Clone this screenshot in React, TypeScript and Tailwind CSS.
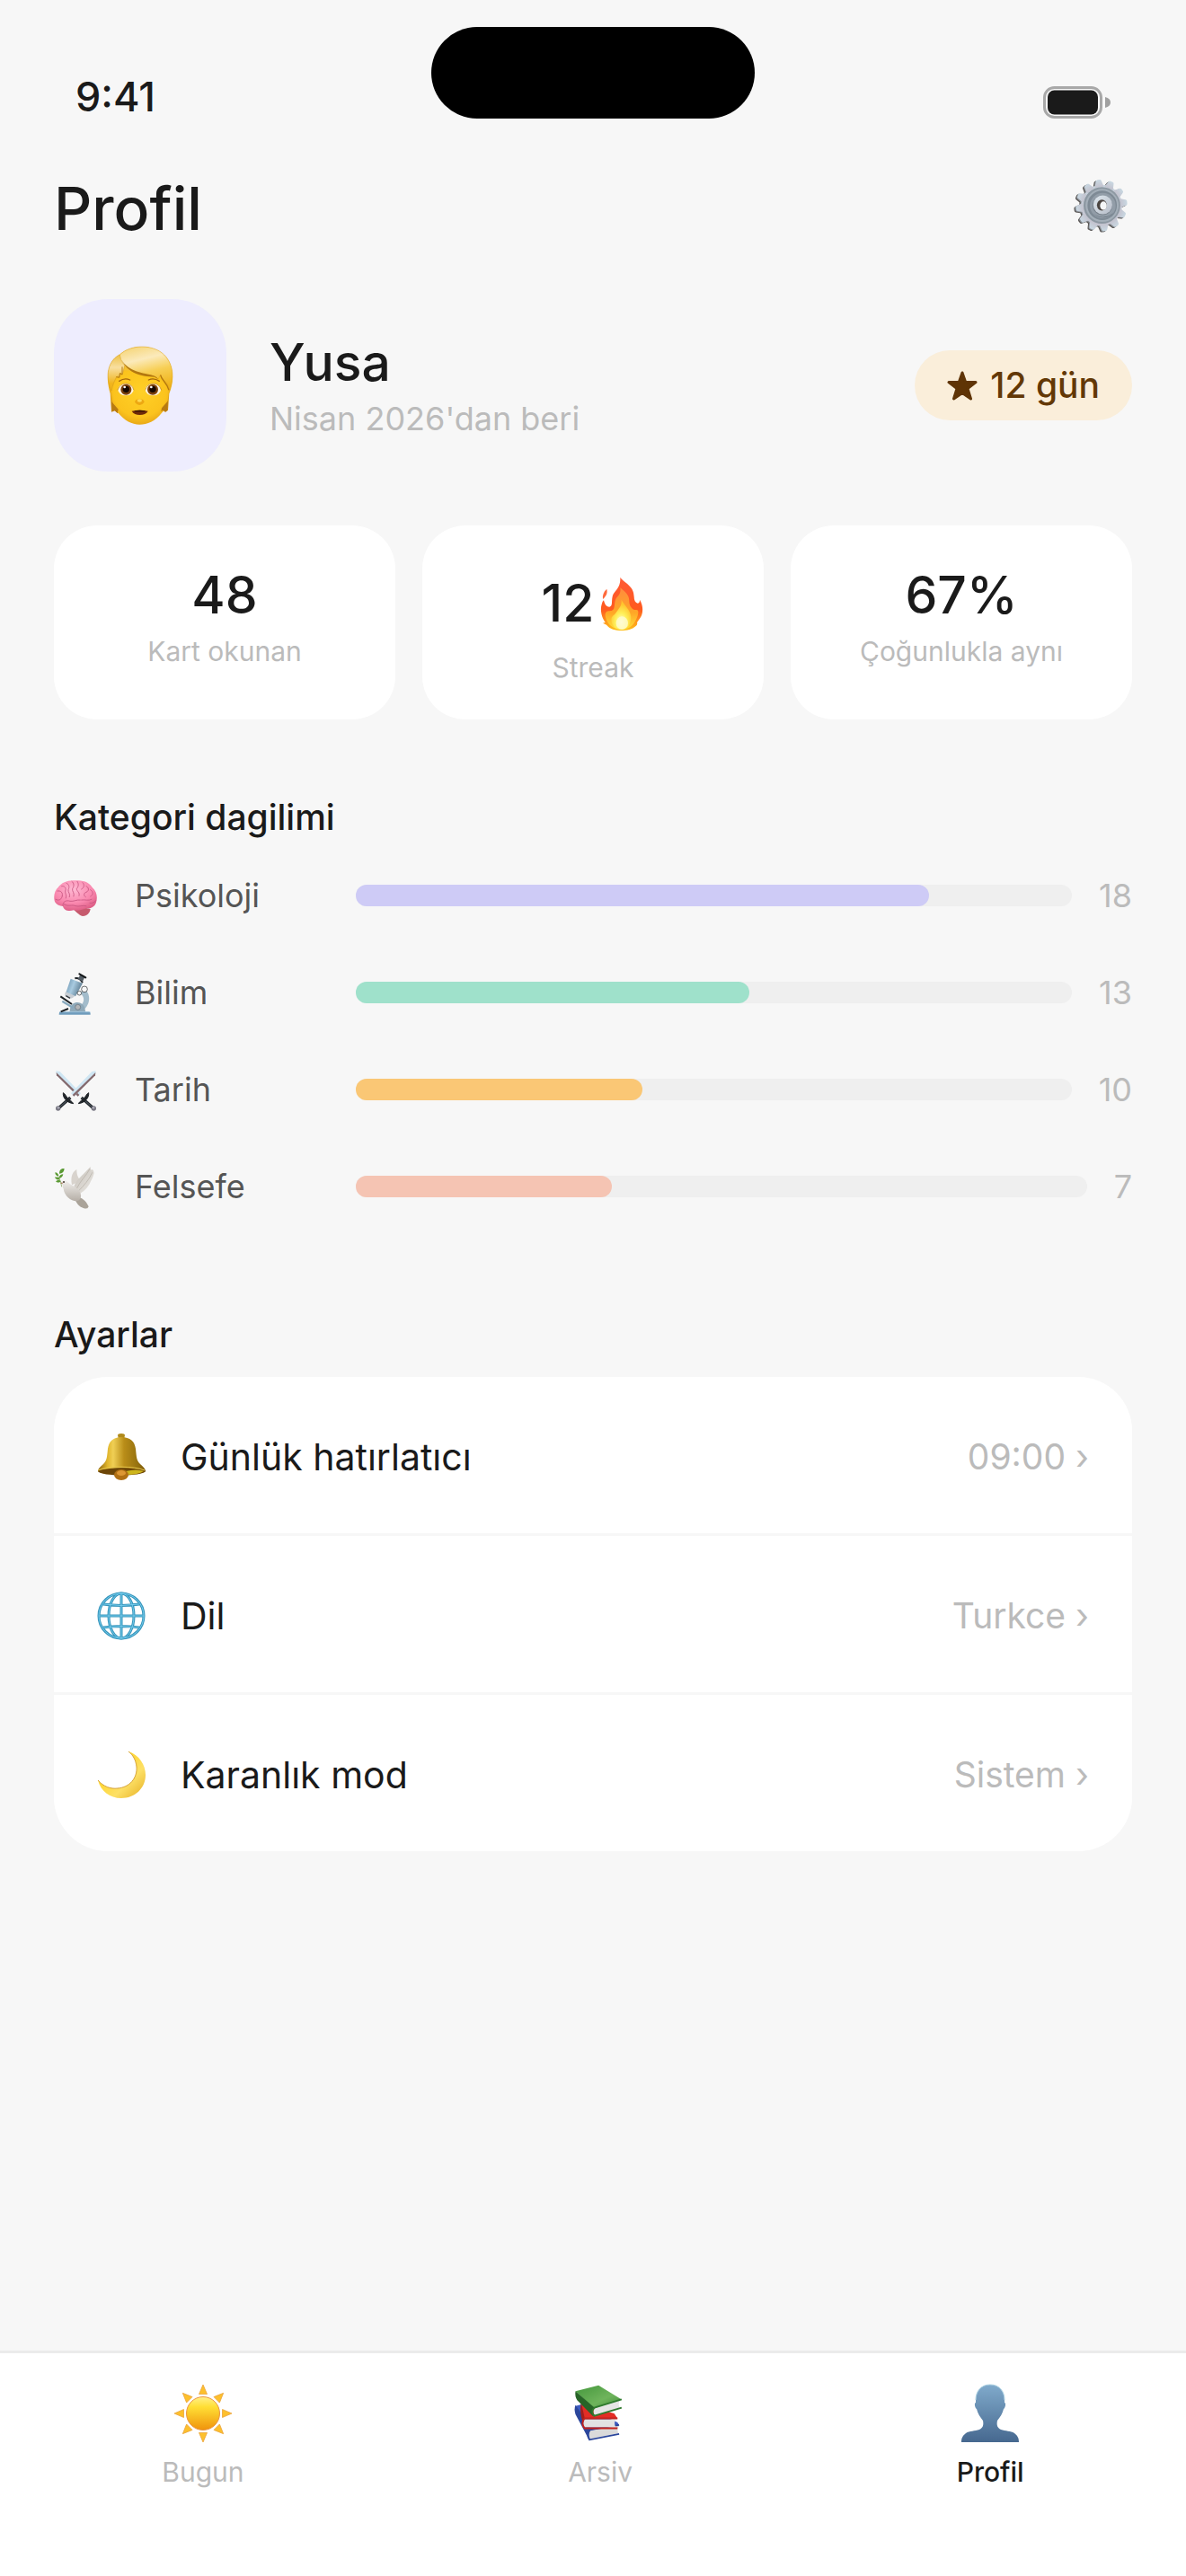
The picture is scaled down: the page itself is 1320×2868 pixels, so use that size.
import { useState } from "react";
import type { ReactNode } from "react";

function BatteryIcon() {
  return (
    <svg viewBox="0 0 75 36" className="h-9 w-[75px]" aria-hidden="true">
      <rect x="1.5" y="1.5" width="63" height="33" rx="11" fill="none" stroke="#a8a8a8" strokeWidth="3" />
      <rect x="5" y="4.5" width="56" height="27" rx="7.5" fill="#1a1a1a" />
      <path d="M69 12c4 1 6 3 6 6s-2 5-6 6z" fill="#a0a0a0" />
    </svg>
  );
}

const teeth = Array.from({ length: 12 }, (_, i) => i * 30 - 7);

function GearShape({ fill }: { fill: string }) {
  return (
    <g fill={fill}>
      <circle cx="256" cy="146" r="67" />
      {teeth.map((angle) => (
        <path key={angle} d="M241 86L247 66Q248 62 252 62H260Q264 62 265 66L271 86Z" transform={`rotate(${angle} 256 146)`} />
      ))}
    </g>
  );
}

function GearIcon() {
  return (
    <svg viewBox="162 56 182 182" className="size-[62px]" aria-hidden="true">
      <defs>
        <linearGradient id="gearFace" x1="0" y1="0" x2="0" y2="1">
          <stop offset="0" stopColor="#c9d8e2" />
          <stop offset="1" stopColor="#c3c2ce" />
        </linearGradient>
        <linearGradient id="gearHub" x1="0" y1="0" x2="1" y2="1">
          <stop offset="0" stopColor="#dfe8ee" />
          <stop offset="1" stopColor="#b6bcc8" />
        </linearGradient>
      </defs>
      <g transform="translate(-6 4)">
        <GearShape fill="#55514f" />
      </g>
      <g transform="translate(-3 2)">
        <GearShape fill="#8a9096" />
      </g>
      <GearShape fill="url(#gearFace)" />
      <circle cx="257" cy="146" r="60" fill="#8d98a2" />
      <circle cx="258" cy="146" r="54" fill="#a4afb9" />
      <circle cx="258" cy="146" r="48" fill="#7e8a95" />
      <circle cx="260" cy="147" r="42" fill="#929da8" />
      <path d="M230 172A42 42 0 0 0 296 168A46 46 0 0 1 230 172Z" fill="#68737e" />
      <circle cx="259" cy="146" r="32" fill="#77818b" />
      <circle cx="260" cy="144" r="31" fill="url(#gearHub)" />
      <ellipse cx="257" cy="145" rx="16" ry="18" fill="#4b4541" />
      <ellipse cx="262" cy="147" rx="11" ry="14" fill="#f4f6f7" />
    </svg>
  );
}

function FaceIcon() {
  return (
    <svg viewBox="39 27 222 270" className="h-[90px] w-[74px]" aria-hidden="true">
      <defs>
        <linearGradient id="faceHair" x1="0" y1="0" x2="0" y2="1">
          <stop offset="0" stopColor="#f3c64b" />
          <stop offset="0.5" stopColor="#f6bd22" />
          <stop offset="1" stopColor="#c98a12" />
        </linearGradient>
        <radialGradient id="faceSkin" cx="0.5" cy="0.4" r="0.65">
          <stop offset="0" stopColor="#ffd027" />
          <stop offset="0.7" stopColor="#fbc31d" />
          <stop offset="1" stopColor="#e3a016" />
        </radialGradient>
        <linearGradient id="faceTop" x1="0.3" y1="0" x2="0.6" y2="1">
          <stop offset="0" stopColor="#f6d77e" />
          <stop offset="0.3" stopColor="#fbeabb" />
          <stop offset="0.6" stopColor="#f7cf55" />
          <stop offset="1" stopColor="#efb31b" />
        </linearGradient>
        <linearGradient id="faceSide" x1="0" y1="0" x2="0" y2="1">
          <stop offset="0" stopColor="#eec146" />
          <stop offset="0.35" stopColor="#f8dfa0" />
          <stop offset="0.8" stopColor="#f0b41c" />
        </linearGradient>
      </defs>
      <path d="M54 251L50 190C38 150 34 86 78 62C118 22 196 24 232 62C264 92 264 150 247 190L243 245L234 252L228 246L222 252L148 262L82 250L74 255L66 247Z" fill="url(#faceHair)" />
      <path d="M53 168C60 140 76 128 92 112L206 120C226 134 240 154 246 176C243 212 240 238 222 254C200 282 174 293 148 293C122 293 98 280 78 256C58 238 55 208 53 168Z" fill="url(#faceSkin)" />
      <path d="M54 180C36 148 34 86 80 60C92 66 98 82 98 96L91 126L84 120L82 134L72 132C64 146 58 162 54 180Z" fill="url(#faceSide)" stroke="#d49a1a" strokeWidth="1.5" />
      <path d="M82 60C118 24 194 24 230 60C262 92 264 140 248 176C244 160 238 150 222 142L218 126L210 142C204 130 192 132 176 126C130 124 88 104 82 60Z" fill="url(#faceTop)" stroke="#dca21c" strokeWidth="1.5" />
      <path d="M84 64C92 100 132 118 176 125C192 128 204 130 210 142L198 134C150 134 98 118 84 64Z" fill="#b37810" />
      <path d="M218 128C222 146 238 150 246 178" fill="none" stroke="#b37810" strokeWidth="4" />
      <path d="M90 100V126L82 122L80 136L70 134" fill="none" stroke="#b37810" strokeWidth="3" />
      <path d="M54 216L56 250L64 246L74 254L77 242Z" fill="#b77a12" />
      <path d="M243 214L241 245L234 250L226 245L220 250L222 238Z" fill="#b77a12" />
      <path d="M80 148Q98 136 116 144M178 144Q196 136 214 148" fill="none" stroke="#a3640c" strokeWidth="4" strokeLinecap="round" />
      <ellipse cx="102" cy="176" rx="26" ry="20" fill="#fff6e3" />
      <ellipse cx="193" cy="176" rx="26" ry="20" fill="#fff6e3" />
      <path d="M74 178Q86 154 104 156Q122 157 129 178M167 178Q174 157 192 156Q212 154 221 178" fill="none" stroke="#b87a15" strokeWidth="2" />
      <circle cx="103" cy="176" r="18" fill="#7a3f0b" />
      <circle cx="192" cy="176" r="18" fill="#7a3f0b" />
      <circle cx="103" cy="175" r="11" fill="#170800" />
      <circle cx="192" cy="175" r="11" fill="#170800" />
      <circle cx="98" cy="168" r="4" fill="#fff" />
      <circle cx="187" cy="168" r="4" fill="#fff" />
      <path d="M132 218Q134 208 148 208Q162 208 164 218Q156 229 148 228Q140 229 132 218Z" fill="#eda812" />
      <ellipse cx="148" cy="213" rx="8" ry="5" fill="#ffd953" />
      <path d="M122 248Q148 242 176 248Q168 261 149 261Q130 261 122 248Z" fill="#6d2a08" />
      <path d="M130 247Q148 244 168 247L164 250H134Z" fill="#2c0d02" />
    </svg>
  );
}

function FlameIcon() {
  return (
    <svg viewBox="222 26 150 186" className="h-[62px] w-[50px]" aria-hidden="true">
      <defs>
        <linearGradient id="flameOuter" x1="0" y1="0" x2="0" y2="1">
          <stop offset="0" stopColor="#ff5a36" />
          <stop offset="0.6" stopColor="#ff5a1f" />
          <stop offset="1" stopColor="#ffc21a" />
        </linearGradient>
        <linearGradient id="flameMid" x1="0" y1="0" x2="0" y2="1">
          <stop offset="0" stopColor="#ff8a3d" />
          <stop offset="0.6" stopColor="#ffa726" />
          <stop offset="1" stopColor="#ffe23a" />
        </linearGradient>
        <radialGradient id="flameCore" cx="0.5" cy="0.75" r="0.6">
          <stop offset="0" stopColor="#fffde0" />
          <stop offset="0.5" stopColor="#fff05a" />
          <stop offset="1" stopColor="#ffc52e" />
        </radialGradient>
      </defs>
      <path d="M247 70C250 84 246 92 234 104C232 92 236 80 247 70Z" fill="#ff6a3c" />
      <path d="M292 31C304 50 338 58 338 96C338 108 342 116 350 118C357 117 357 110 357 106C370 128 369 152 358 168L348 182C350 186 348 192 344 194C332 206 314 209 296 209C276 209 256 204 246 190L234 184L242 182C230 166 224 140 230 122C232 114 234 110 237 108C240 120 244 130 256 130C268 128 262 112 266 96C270 76 294 70 292 31Z" fill="url(#flameOuter)" />
      <path d="M292 66C312 82 322 92 322 112C322 128 334 142 346 140C356 140 352 158 346 170C336 194 318 206 296 206C270 206 250 190 244 168C238 150 246 142 256 144C278 144 270 120 276 106C282 92 296 90 292 66Z" fill="url(#flameMid)" />
      <path d="M296 106C304 124 326 138 328 164C328 190 314 206 297 206C278 206 262 194 262 172C262 160 274 158 280 146C288 134 298 126 296 106Z" fill="url(#flameCore)" />
      <ellipse cx="298" cy="184" rx="20" ry="22" fill="#fffbd0" opacity="0.8" />
    </svg>
  );
}

function StarIcon() {
  return (
    <svg viewBox="0 0 34 33" className="h-[33px] w-[34px]" aria-hidden="true">
      <path d="M17 2L20.6 12.3L32 12.6L23 19.6L26.5 31L17 24.4L7.5 31L11 19.6L2 12.6L13.4 12.3Z" fill="#5f3406" stroke="#5f3406" strokeWidth="3" strokeLinejoin="round" />
    </svg>
  );
}

function BrainIcon() {
  return (
    <svg viewBox="180 336 150 150" className="size-full" aria-hidden="true">
      <defs>
        <radialGradient id="brain" cx="0.45" cy="0.3" r="0.75">
          <stop offset="0" stopColor="#ffb9d3" />
          <stop offset="0.6" stopColor="#f987ae" />
          <stop offset="1" stopColor="#d9577f" />
        </radialGradient>
      </defs>
      <path d="M246 458L284 452L302 456C300 472 288 480 276 480C264 478 256 466 246 458Z" fill="#c65a6d" />
      <path d="M182 428C178 410 184 392 194 384C206 366 230 358 252 361C280 358 300 370 308 384C322 396 326 414 322 430C320 446 306 456 290 454C276 458 262 464 246 460C230 466 212 460 210 446C196 446 184 438 182 428Z" fill="url(#brain)" />
      <path d="M210 446C208 430 222 426 234 430C246 432 256 424 268 426M214 440C228 450 240 440 252 446C264 450 276 442 288 446M186 424C198 430 206 424 208 412M192 396C204 394 210 402 208 412M206 380C216 378 222 386 218 396C216 404 224 408 220 420M222 370C232 374 232 384 228 392C226 400 236 404 232 416M240 364C248 370 248 380 242 388C240 398 250 402 246 414M258 364C264 372 262 382 256 388C256 398 268 400 264 412M276 368C284 376 280 386 272 390M288 380C298 384 298 396 288 400C280 402 278 412 286 416M302 392C312 398 312 410 302 414M272 426C284 424 296 430 306 424M300 436C308 438 316 434 320 428" fill="none" stroke="#c75480" strokeWidth="2.5" strokeLinecap="round" />
    </svg>
  );
}

function MicroscopeIcon() {
  return (
    <svg viewBox="180 662 150 150" className="size-full" aria-hidden="true">
      <defs>
        <linearGradient id="tube" x1="0" y1="0.3" x2="1" y2="0.7">
          <stop offset="0" stopColor="#6f97b3" />
          <stop offset="0.4" stopColor="#a9cbe0" />
          <stop offset="1" stopColor="#4d6b80" />
        </linearGradient>
      </defs>
      <path d="M280 724C304 738 304 776 278 796L262 786C282 774 286 754 268 740Z" fill="#a3bccb" />
      <path d="M234 792C238 762 280 762 284 794L286 804H232Z" fill="#8fa9b9" />
      <circle cx="260" cy="786" r="9" fill="#b4b6b8" stroke="#5d6a74" strokeWidth="2" />
      <path d="M200 801H298Q303 803 302 811H197Q197 803 200 801Z" fill="#6f9cbc" />
      <path d="M199 802H302" stroke="#b9d8ea" strokeWidth="2" />
      <path d="M202 750L240 776" stroke="#1c2125" strokeWidth="6" />
      <path d="M208 766L244 788" stroke="#86a8bd" strokeWidth="7" />
      <path d="M203 801L228 791" stroke="#1c2125" strokeWidth="6" />
      <path d="M236 691L276 706L252 750L220 738Z" fill="url(#tube)" />
      <path d="M219 734L250 748Q240 760 232 756L218 750Q214 744 219 734Z" fill="#c7cdd3" />
      <path d="M220 748L234 756" stroke="#363c42" strokeWidth="4" />
      <path d="M250 690Q264 686 276 704" fill="none" stroke="#20262a" strokeWidth="6" />
      <path d="M269 676L284 684L276 700L260 692Z" fill="#555e66" />
      <path d="M265 675L286 687" stroke="#15181a" strokeWidth="6" strokeLinecap="round" />
      <circle cx="282" cy="726" r="10" fill="#f7f7f7" stroke="#22272b" strokeWidth="2" />
      <circle cx="265" cy="739" r="7" fill="#f7f7f7" stroke="#22272b" strokeWidth="2" />
    </svg>
  );
}

function Sword() {
  return (
    <g>
      <path d="M187 999L200 1001L270 1074L260 1084L189 1013Z" fill="#cfe6f3" />
      <path d="M188 1004L189 1014L260 1084L265 1079Z" fill="#84696d" />
      <path d="M272 1088L312 1124" stroke="#23282d" strokeWidth="10" />
      <path d="M274 1090L308 1120" stroke="#566069" strokeWidth="3" />
      <path d="M296 1072C298 1090 282 1106 262 1108C266 1100 276 1096 281 1090C286 1084 289 1076 296 1072Z" fill="#202529" stroke="#202529" strokeWidth="3" strokeLinejoin="round" />
      <circle cx="313" cy="1124" r="8" fill="#767580" />
      <circle cx="312" cy="1122" r="4" fill="#aaa9b5" />
    </g>
  );
}

function SwordsIcon() {
  return (
    <svg viewBox="180 986 150 150" className="size-full" aria-hidden="true">
      <Sword />
      <g transform="translate(507 0) scale(-1 1)">
        <Sword />
      </g>
    </svg>
  );
}

function DoveIcon() {
  return (
    <svg viewBox="180 1310 150 150" className="size-full" aria-hidden="true">
      <defs>
        <linearGradient id="doveBody" x1="0" y1="0" x2="0" y2="1">
          <stop offset="0" stopColor="#f1efec" />
          <stop offset="1" stopColor="#b5aea6" />
        </linearGradient>
        <linearGradient id="doveWing" x1="0" y1="0" x2="1" y2="1">
          <stop offset="0" stopColor="#c4beb6" />
          <stop offset="1" stopColor="#eceae6" />
        </linearGradient>
      </defs>
      <path d="M240 1380C234 1350 244 1334 256 1328C256 1346 260 1356 270 1366Z" fill="#d8d3cd" />
      <path d="M246 1390C250 1366 272 1352 302 1319C302 1328 302 1332 308 1328C314 1332 312 1336 314 1340C310 1356 306 1362 302 1370C294 1390 276 1404 262 1412Z" fill="url(#doveWing)" />
      <path d="M300 1326C290 1346 268 1366 256 1392M308 1338C298 1362 280 1382 262 1400" fill="none" stroke="#b4ada4" strokeWidth="2" />
      <path d="M262 1420C278 1424 290 1438 296 1452L292 1458C278 1460 262 1452 252 1432Z" fill="#aaa399" />
      <path d="M206 1372C208 1364 218 1362 226 1370C236 1380 250 1384 262 1396C274 1410 274 1430 256 1434C236 1434 214 1416 212 1392C208 1386 210 1380 206 1372Z" fill="url(#doveBody)" />
      <circle cx="213" cy="1370" r="3" fill="#40322a" />
      <path d="M201 1374L208 1371L209 1377Z" fill="#a86b4e" />
      <path d="M206 1386C204 1368 196 1352 188 1344" fill="none" stroke="#71963f" strokeWidth="2" />
      <path d="M198 1342C198 1328 206 1324 215 1325C214 1336 208 1342 198 1342ZM184 1338C190 1338 196 1344 196 1350C188 1350 184 1346 184 1338ZM196 1358C198 1348 204 1344 211 1344C210 1352 204 1358 196 1358ZM183 1354C192 1352 198 1356 200 1362C192 1364 186 1360 183 1354ZM186 1368C194 1362 200 1364 203 1368C198 1374 190 1372 186 1368Z" fill="#5b9a34" />
    </svg>
  );
}

function BellIcon() {
  return (
    <svg viewBox="0 0 54 54" className="size-full" aria-hidden="true">
      <defs>
        <linearGradient id="bell" x1="0" y1="0" x2="1" y2="0">
          <stop offset="0" stopColor="#8c6310" />
          <stop offset="0.2" stopColor="#e0b52c" />
          <stop offset="0.32" stopColor="#f0cf55" />
          <stop offset="0.55" stopColor="#b98d18" />
          <stop offset="0.85" stopColor="#94700f" />
          <stop offset="1" stopColor="#7d5a0c" />
        </linearGradient>
      </defs>
      <path d="M23 3Q23 1 27 1Q31 1 31 3L30 7H24Z" fill="#b08a1c" />
      <path d="M27 5C37 5 42 10 43 18C44 28 44 31 48 35C51 38 54 40 54 43C50 48 4 48 1 43C1 40 4 38 7 35C11 31 11 28 12 18C13 10 18 5 27 5Z" fill="url(#bell)" />
      <path d="M1 43C12 38 42 38 54 43C50 49 5 49 1 43Z" fill="#6d4607" />
      <path d="M32 43Q44 40 52 43Q46 47 32 47Z" fill="#cdb51c" />
      <ellipse cx="27" cy="47" rx="8" ry="6" fill="#b06f13" />
      <ellipse cx="27" cy="45" rx="5" ry="3" fill="#dd9633" />
      <path d="M1 42C12 37 42 37 53 42" fill="none" stroke="#e9c94d" strokeWidth="1" />
    </svg>
  );
}

function GlobeIcon() {
  return (
    <svg viewBox="0 0 54 54" className="size-full" aria-hidden="true">
      <g fill="none" stroke="#3795bb" strokeWidth="3">
        <circle cx="27" cy="27" r="25" />
        <ellipse cx="27" cy="27" rx="14" ry="25" />
        <path d="M27 2V52M2 27H52M7 14Q27 17 47 14M7 40Q27 37 47 40" />
      </g>
      <g fill="none" stroke="#72cbec" strokeWidth="1">
        <circle cx="27" cy="27" r="25" />
        <ellipse cx="27" cy="27" rx="14" ry="25" />
        <path d="M27 2V52M2 27H52M7 14Q27 17 47 14M7 40Q27 37 47 40" />
      </g>
    </svg>
  );
}

function MoonIcon() {
  return (
    <svg viewBox="0 0 54 54" className="size-full" aria-hidden="true">
      <defs>
        <linearGradient id="moon" x1="0" y1="0" x2="1" y2="1">
          <stop offset="0.4" stopColor="#ffd83a" />
          <stop offset="0.65" stopColor="#fde066" />
          <stop offset="1" stopColor="#e5ae22" />
        </linearGradient>
      </defs>
      <path d="M35 1C47 5 54 16 54 27C54 42 42 53 27 53C14 53 4 45 1 33C7 40 15 43 23 42C36 41 45 31 44 18C43 10 40 5 35 1Z" fill="url(#moon)" />
      <path d="M1 33C7 40 15 43 23 42C36 41 45 31 44 18C43 10 40 5 35 1" fill="none" stroke="#d6a33a" strokeWidth="1" />
    </svg>
  );
}

const rays = [0, 45, 90, 135, 180, 225, 270, 315];

function SunIcon() {
  return (
    <svg viewBox="0 0 66 66" className="size-[66px]" aria-hidden="true">
      <defs>
        <linearGradient id="sun" x1="0" y1="0" x2="0" y2="1">
          <stop offset="0" stopColor="#fff08a" />
          <stop offset="0.3" stopColor="#ffdf35" />
          <stop offset="1" stopColor="#f0930c" />
        </linearGradient>
      </defs>
      {rays.map((angle) => (
        <path key={angle} d="M33 1L37.5 11.5H28.5Z" fill="#fdc02c" stroke="#eba53c" strokeWidth="0.8" transform={`rotate(${angle} 33 33)`} />
      ))}
      <circle cx="33" cy="33" r="18.5" fill="url(#sun)" stroke="#eb9540" strokeWidth="1" />
    </svg>
  );
}

function BooksIcon() {
  return (
    <svg viewBox="0 0 66 72" className="size-[66px]" aria-hidden="true">
      <defs>
        <linearGradient id="bookTop" x1="0" y1="0" x2="1" y2="1">
          <stop offset="0" stopColor="#44973c" />
          <stop offset="0.6" stopColor="#6fb45c" />
          <stop offset="1" stopColor="#3f8c38" />
        </linearGradient>
      </defs>
      <path d="M3 27L10 25L54 47L56 50L20 57Z" fill="#3d5bbf" />
      <path d="M3 26L20 50L22 59L20 69L3 37Q1 31 3 26Z" fill="#2b469b" />
      <path d="M21 57L56 51Q53 55 55 60L21 67Q18 62 21 57Z" fill="#dadada" />
      <path d="M56 50L20 56Q16 62 20 68L56 61" fill="none" stroke="#2b469b" strokeWidth="2" />
      <path d="M10 23L28 30L50 36L54 42L14 43Z" fill="#e32d25" />
      <path d="M10 23L14 41Q11 47 14 55L10 40Q8 30 10 23Z" fill="#a81d19" />
      <path d="M14 43H52Q49 48 52 53H14Q11 48 14 43Z" fill="#e2e2e2" />
      <path d="M54 42H14Q9 48 14 54H54" fill="none" stroke="#c3221d" strokeWidth="2" />
      <path d="M3 9L31 2L59 19L26 30Z" fill="url(#bookTop)" />
      <path d="M3 9L26 29Q22 34 25 40L5 20Q2 15 3 9Z" fill="#276427" />
      <path d="M26 30L57 20Q54 25 57 29L27 39Q23 34 26 30Z" fill="#e5e5e5" />
      <path d="M59 19L26 29Q21 34 26 39L59 29" fill="none" stroke="#2f7a2e" strokeWidth="2" />
    </svg>
  );
}

function PersonIcon() {
  return (
    <svg viewBox="0 0 66 66" className="size-[66px]" aria-hidden="true">
      <defs>
        <linearGradient id="person" x1="0" y1="0" x2="0" y2="1">
          <stop offset="0" stopColor="#80aacb" />
          <stop offset="1" stopColor="#46688f" />
        </linearGradient>
      </defs>
      <path d="M33 1C43 1 49 8 49 19V21C51 21 50 27 48 28C47 33 44 37 41 41C40 46 41 49 45 51C50 53 56 52 60 55C64 58 65 61 65 65H1C1 61 2 58 6 55C10 52 16 53 21 51C25 49 26 46 25 41C22 37 19 33 18 28C16 27 15 21 17 21V19C17 8 23 1 33 1Z" fill="url(#person)" />
      <path d="M17 18C17 8 23 1 33 1C43 1 49 8 49 18" fill="none" stroke="#a9d0e2" strokeWidth="1" />
    </svg>
  );
}

const stats = [
  { value: "48", label: "Kart okunan", flame: false },
  { value: "12", label: "Streak", flame: true },
  { value: "67%", label: "Çoğunlukla aynı", flame: false },
];

const categories = [
  { name: "Psikoloji", icon: <BrainIcon />, percent: 80, count: 18, color: "bg-[#cecbf6]" },
  { name: "Bilim", icon: <MicroscopeIcon />, percent: 55, count: 13, color: "bg-[#9fe1cb]" },
  { name: "Tarih", icon: <SwordsIcon />, percent: 40, count: 10, color: "bg-[#fac775]" },
  { name: "Felsefe", icon: <DoveIcon />, percent: 35, count: 7, color: "bg-[#f5c4b3]" },
];

const settings = [
  { name: "Günlük hatırlatıcı", icon: <BellIcon />, value: "09:00" },
  { name: "Dil", icon: <GlobeIcon />, value: "Turkce" },
  { name: "Karanlık mod", icon: <MoonIcon />, value: "Sistem" },
];

const tabs: { id: string; label: string; icon: ReactNode }[] = [
  { id: "bugun", label: "Bugun", icon: <SunIcon /> },
  { id: "arsiv", label: "Arsiv", icon: <BooksIcon /> },
  { id: "profil", label: "Profil", icon: <PersonIcon /> },
];

export default function App() {
  const [activeTab, setActiveTab] = useState("profil");

  return (
    <div className="flex min-h-screen flex-col bg-[#f7f7f7] font-['Inter',sans-serif] text-[#1a1a1a]">
      <div className="grid grid-cols-3 items-end px-[84px] pt-[30px]">
        <span className="text-[45px] leading-[48px] font-medium">9:41</span>
        <div className="h-[102px] w-[360px] justify-self-center rounded-full bg-black" />
        <div className="justify-self-end">
          <BatteryIcon />
        </div>
      </div>

      <main className="flex-1 px-[60px]">
        <header className="flex items-start justify-between pt-14">
          <h1 className="text-[66px] leading-[88px] font-medium">Profil</h1>
          <button type="button" aria-label="Ayarlar" className="mr-1 cursor-pointer py-2.5">
            <GearIcon />
          </button>
        </header>

        <section className="mt-[57px] flex items-center gap-12">
          <div className="flex size-48 items-center justify-center rounded-[60px] bg-[#eeedfe]">
            <FaceIcon />
          </div>
          <div className="flex-1">
            <h2 className="text-[57px] leading-[74px] font-medium">Yusa</h2>
            <p className="text-[36px] leading-[50px] text-[#bbbbbb]">Nisan 2026'dan beri</p>
          </div>
          <div className="flex h-[78px] items-center gap-3.5 rounded-full bg-[#faeeda] px-9 text-[#633806]">
            <StarIcon />
            <span className="text-[39px] leading-[48px] font-medium">12 gün</span>
          </div>
        </section>

        <section className="mt-[60px] grid grid-cols-3 gap-[30px]">
          {stats.map((stat) => (
            <div key={stat.label} className="flex flex-col items-center gap-2 rounded-[48px] bg-white pt-[42px] pb-10">
              <div className={stat.flame ? "flex h-[90px] items-center gap-1.5" : "flex h-[72px] items-center"}>
                <span className="text-[57px] leading-[72px] font-medium">{stat.value}</span>
                {stat.flame && <FlameIcon />}
              </div>
              <p className="text-[30px] leading-9 text-[#bbbbbb]">{stat.label}</p>
            </div>
          ))}
        </section>

        <section className="mt-[85px]">
          <h2 className="text-[39px] leading-[48px] font-medium">Kategori dagilimi</h2>
          <div className="mt-[38px] flex flex-col gap-[58px]">
            {categories.map((category) => (
              <div key={category.name} className="flex h-[50px] items-center">
                <span className="size-[50px]">{category.icon}</span>
                <span className="w-[286px] pl-10 text-[36px] leading-[48px] text-[#555555]">{category.name}</span>
                <div className="h-6 flex-1 rounded-full bg-[#efefef]">
                  <div className={`h-full rounded-full ${category.color}`} style={{ width: `${category.percent}%` }} />
                </div>
                <span className="pl-[30px] text-[36px] leading-[48px] text-[#bbbbbb]">{category.count}</span>
              </div>
            ))}
          </div>
        </section>

        <section className="mt-[116px]">
          <h2 className="text-[39px] leading-[48px] font-medium">Ayarlar</h2>
          <div className="mt-[23px] overflow-hidden rounded-[60px] bg-white">
            {settings.map((setting) => (
              <button
                key={setting.name}
                type="button"
                className="flex w-full cursor-pointer items-center border-b-[3px] border-[#f7f7f7] px-12 pt-[62px] pb-[58px] text-left last:border-b-0"
              >
                <span className="size-[54px]">{setting.icon}</span>
                <span className="flex-1 pl-[39px] text-[41px] leading-[54px]">{setting.name}</span>
                <span className="text-[39px] leading-[54px] text-[#bbbbbb]">{setting.value} ›</span>
              </button>
            ))}
          </div>
        </section>
      </main>

      <nav className="flex justify-around border-t-[3px] border-[#ebebeb] bg-white pt-[34px] pb-[98px]">
        {tabs.map((tab) => (
          <a
            key={tab.id}
            href={`#${tab.id}`}
            onClick={() => setActiveTab(tab.id)}
            className={`flex flex-col items-center gap-3.5 text-[30px] leading-9 ${activeTab === tab.id ? "font-medium text-[#1a1a1a]" : "text-[#bbbbbb]"}`}
          >
            {tab.icon}
            {tab.label}
          </a>
        ))}
      </nav>
    </div>
  );
}
